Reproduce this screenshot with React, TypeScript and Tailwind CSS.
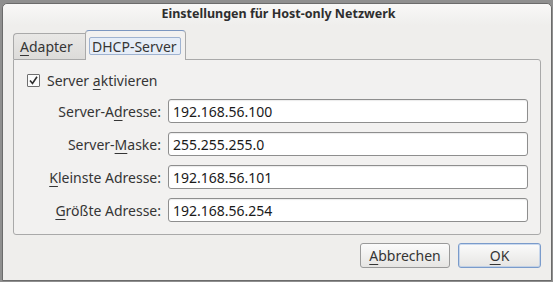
import React from "react";

const font = { fontFamily: '"Noto Sans", "DejaVu Sans", sans-serif' };

function U({ children }: { children: React.ReactNode }) {
  return <span className="underline decoration-1 underline-offset-[3px]">{children}</span>;
}

function Row({ label, value }: { label: React.ReactNode; value: string }) {
  return (
    <div className="flex items-center h-[24px]">
      <div className="w-[148px] text-right pr-[1px] text-[14px] text-[#353535] whitespace-nowrap">{label}</div>
      <div className="ml-[6px] w-[360px] h-[24px] rounded-[3px] border border-[#8e8e8e] bg-white flex items-center pl-[4px] text-[14px] text-[#1a1a1a] shadow-[inset_0_1px_1px_rgba(0,0,0,0.08)]">
        {value}
      </div>
    </div>
  );
}

export default function App() {
  return (
    <div className="w-[553px] h-[282px] bg-[#8f8f8f] overflow-hidden" style={font}>
      <div className="ml-[2px] mt-[3px] w-[550px] h-[278px] rounded-t-[5px] border border-[#6b6b6b] bg-[#efeeec] flex flex-col">
        <div className="h-[21px] rounded-t-[5px] bg-gradient-to-b from-[#f8f8f7] to-[#efeeec] flex items-center justify-center text-[12.5px] font-bold text-[#2e2e2e] pl-[3px]">
          Einstellungen für Host-only Netzwerk
        </div>
        <div className="pt-[5px] px-[10px] flex flex-col">
          <div className="flex items-end h-[30px]">
            <div className="w-[72px] h-[26px] mb-[1px] rounded-tl-[4px] border-l border-t border-[#a9a9a9] bg-gradient-to-b from-[#e9e8e6] to-[#dcdbd9] flex items-center pl-[6px] text-[14px] text-[#353535]">
              <U>A</U>dapter
            </div>
            <div className="relative z-10 w-[101px] h-[30px] rounded-t-[4px] border-x border-t border-[#a9a9a9] border-t-[#7b96c0] bg-[#f2f1f0] flex items-start pt-[6px] pl-[3px]">
              <div className="w-[92px] h-[18px] rounded-[2px] border border-[#9fb3d1] bg-[#e6edf7] flex items-center pl-[2px] text-[14px] text-[#353535] whitespace-nowrap overflow-hidden">
                <U>D</U>HCP-Server
              </div>
            </div>
          </div>
          <div className="-mt-px h-[176px] rounded-b-[3px] rounded-tr-[3px] border border-[#a9a9a9] bg-[#f2f1f0] flex flex-col">
            <div className="flex items-center mt-[13px] ml-[13px] h-[14px]">
              <div className="w-[13px] h-[13px] border border-[#6e6e6e] rounded-[1px] bg-[#fbfbfb] flex items-center justify-center">
                <svg width="11" height="11" viewBox="0 0 11 11">
                  <path d="M2 5.5 L4.5 8.5 L9 1.8" fill="none" stroke="#2e2e2e" strokeWidth="1.6" />
                </svg>
              </div>
              <span className="ml-[7px] text-[14px] text-[#353535]">
                Server <U>a</U>ktivieren
              </span>
            </div>
            <div className="mt-[12px] flex flex-col gap-[9px]">
              <Row label={<>Server-A<U>d</U>resse:</>} value="192.168.56.100" />
              <Row label={<>Server-<U>M</U>aske:</>} value="255.255.255.0" />
              <Row label={<><U>K</U>leinste Adresse:</>} value="192.168.56.101" />
              <Row label={<><U>G</U>rößte Adresse:</>} value="192.168.56.254" />
            </div>
          </div>
          <div className="mt-[8px] flex justify-end gap-[8px]">
            <button className="w-[90px] h-[25px] rounded-[3px] border border-[#9a9a9a] bg-gradient-to-b from-[#fbfbfb] to-[#e6e5e3] text-[14px] text-[#353535] flex items-center justify-center">
              <U>A</U>bbrechen
            </button>
            <button className="w-[83px] h-[25px] rounded-[3px] border border-[#7a9bcb] bg-gradient-to-b from-[#fbfbfb] to-[#e6e5e3] text-[14px] text-[#353535] flex items-center justify-center shadow-[inset_0_0_0_1px_rgba(170,195,230,0.6)]">
              <U>O</U>K
            </button>
          </div>
        </div>
      </div>
    </div>
  );
}
